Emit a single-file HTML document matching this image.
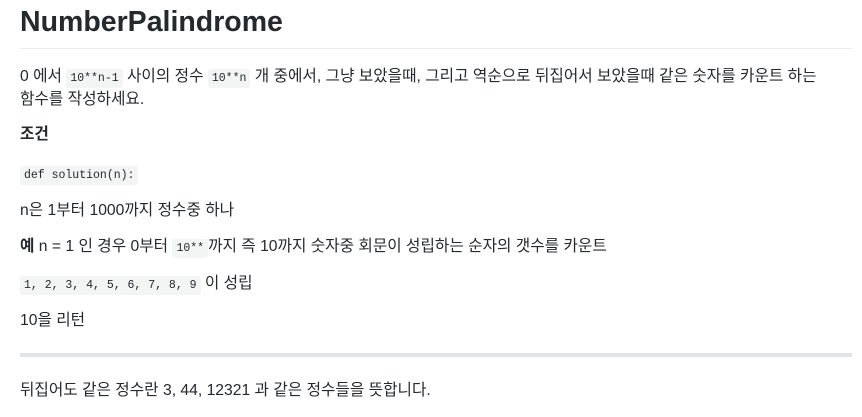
<!DOCTYPE html>
<html><head><meta charset="utf-8"><style>
body{margin:0;background:#fff;color:#24292e;font-family:"Liberation Sans","Noto Sans CJK KR",sans-serif;font-size:15.7px;}
.w{position:absolute;left:20px;width:840px;}
h1{position:absolute;left:20px;top:2px;margin:0;font-size:28.5px;font-weight:600;line-height:40px;width:832px;}
.hr1{position:absolute;left:20px;top:48px;width:832px;height:1px;background:#eaecef;}
.hr2{position:absolute;left:20px;top:353px;width:832px;height:4px;background:#e1e4e8;}
p{margin:0;line-height:21px;}
code{font-family:"Liberation Mono",monospace;font-size:11.5px;background:#f3f4f4;border-radius:3px;padding:3px 4px;}
</style></head><body>
<h1>NumberPalindrome</h1>
<div class="hr1"></div>
<div class="w" style="top:66px"><p>0 에서 <code>10**n-1</code> 사이의 정수 <code>10**n</code> 개 중에서, 그냥 보았을때, 그리고 역순으로 뒤집어서 보았을때 같은 숫자를 카운트 하는<br>함수를 작성하세요.</p></div>
<div class="w" style="top:124px"><p><b>조건</b></p></div>
<div class="w" style="top:163px"><p><code>def solution(n):</code></p></div>
<div class="w" style="top:200px"><p>n은 1부터 1000까지 정수중 하나</p></div>
<div class="w" style="top:236px"><p><b>예</b> n = 1 인 경우 0부터 <code>10**</code>까지 즉 10까지 숫자중 회문이 성립하는 순자의 갯수를 카운트</p></div>
<div class="w" style="top:273px"><p><code>1, 2, 3, 4, 5, 6, 7, 8, 9</code> 이 성립</p></div>
<div class="w" style="top:310px"><p>10을 리턴</p></div>
<div class="hr2"></div>
<div class="w" style="top:380px"><p>뒤집어도 같은 정수란 3, 44, 12321 과 같은 정수들을 뜻합니다.</p></div>
</body></html>
